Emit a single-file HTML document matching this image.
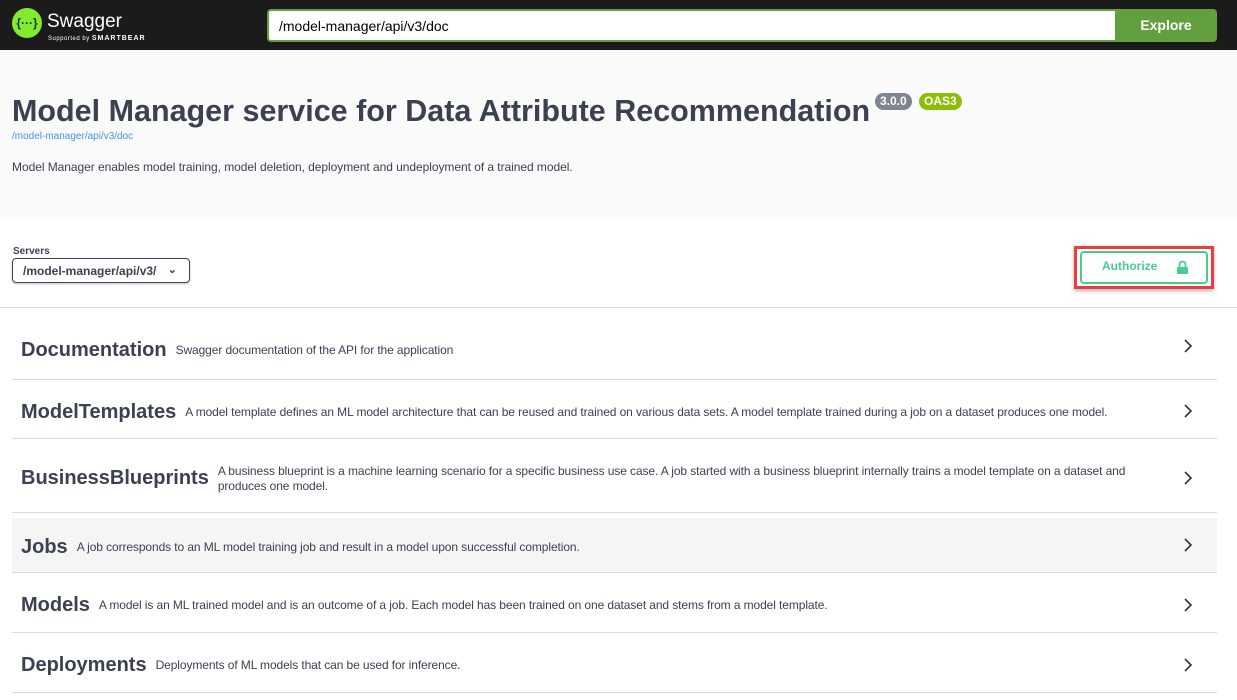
<!DOCTYPE html>
<html><head><meta charset="utf-8"><style>
*{margin:0;padding:0;box-sizing:border-box}
body{width:1237px;height:700px;overflow:hidden;background:#fff;font-family:"Liberation Sans",Arial,sans-serif;color:#3b4151}
.top{height:50px;background:#1b1b1b;position:relative}
.logo{position:absolute;left:12px;top:8px;width:30px;height:30px;border-radius:50%;background:#85ea2d;color:#173647;font-size:12px;font-weight:bold;text-align:center;line-height:30px}
.sw{position:absolute;left:47px;top:11px;color:#fff;font-size:19px}
.sb{position:absolute;left:48px;top:35px;color:#fff;font-size:6px;letter-spacing:.5px}
.sb b{font-size:7px;letter-spacing:1px}
.inp{position:absolute;left:267px;top:9px;width:850px;height:33px;border:2px solid #62a03f;border-radius:4px 0 0 4px;background:#fff;font-size:14px;padding:7px 10px;color:#000}
.exp{position:absolute;left:1115px;top:9px;width:102px;height:33px;background:#62a03f;color:#fff;font-weight:bold;font-size:14px;text-align:center;line-height:33px;border-radius:0 4px 4px 0}
.info{background:#fafafa;height:167px;position:relative}
h1{position:absolute;left:12px;top:44px;font-size:30.5px;font-weight:bold;color:#3b4151}
.bd{position:absolute;top:43px;height:17px;border-radius:9px;color:#fff;font-size:12px;font-weight:bold;line-height:17px;padding:0 5px}
.url{position:absolute;left:12px;top:81px;font-size:10px;color:#4990e2}
.desc{position:absolute;left:12px;top:110px;font-size:12px;letter-spacing:-.05px}
.srv{height:91px;position:relative;border-bottom:1px solid #ddd}
.lbl{position:absolute;left:13px;top:29px;font-size:10px;font-weight:bold}
.sel{position:absolute;left:12px;top:41px;width:178px;height:25px;border:1px solid #41444e;border-radius:4px;font-size:12px;font-weight:bold;padding:5px 10px;box-shadow:0 1px 2px rgba(0,0,0,.25)}
.sel span{position:absolute;right:12px;top:4px;font-size:11px}
.red{position:absolute;left:1074px;top:29px;width:140px;height:43px;border:3px solid #ee3b3b;box-shadow:0 2px 4px rgba(0,0,0,.3)}
.auth{position:absolute;left:3px;top:2px;width:128px;height:33px;border:2px solid #49cc90;border-radius:4px;color:#49cc90;font-weight:bold;font-size:12px;padding:6px 0 0 20px}
.lock{position:absolute;left:95px;top:7px;width:11px;height:14px}
.tags{padding:0 20px 0 12px}
.tag{border-bottom:1px solid #d8dade;position:relative;display:flex;align-items:center;padding:6px 60px 0 9px}
.tag h3{font-size:20px;font-weight:bold;margin-right:9px;white-space:nowrap}
.tag p{font-size:12px;line-height:15px;letter-spacing:-.1px}
.ch{position:absolute;right:24px;top:50%;margin-top:-6px}
</style></head><body>
<div class="top">
<div class="logo">{···}</div><div class="sw">Swagger</div><div class="sb">Supported by <b>SMARTBEAR</b></div>
<div class="inp">/model-manager/api/v3/doc</div><div class="exp">Explore</div>
</div>
<div class="info">
<h1>Model Manager service for Data Attribute Recommendation</h1>
<div class="bd" style="left:875px;background:#7d8492">3.0.0</div>
<div class="bd" style="left:919px;background:#89bf04">OAS3</div>
<div class="url">/model-manager/api/v3/doc</div>
<div class="desc">Model Manager enables model training, model deletion, deployment and undeployment of a trained model.</div>
</div>
<div class="srv">
<div class="lbl">Servers</div>
<div class="sel">/model-manager/api/v3/<span>⌄</span></div>
<div class="red"><div class="auth">Authorize<svg class="lock" viewBox="0 0 11 14"><path d="M2.5 7V4.5a3 3 0 0 1 6 0V7" stroke="#49cc90" stroke-width="1.8" fill="none"/><rect x="0" y="7" width="11" height="7" rx="1" fill="#49cc90"/></svg></div></div>
</div>
<div class="tags">
<div class="tag" style="height:72px;padding-top:14px"><h3>Documentation</h3><p>Swagger documentation of the API for the application</p><svg class="ch" width="10" height="16" viewBox="0 0 10 16"><path d="M2 2l6 6-6 6" stroke="#333" stroke-width="1.6" fill="none"/></svg></div>
<div class="tag" style="height:59px"><h3>ModelTemplates</h3><p>A model template defines an ML model architecture that can be reused and trained on various data sets. A model template trained during a job on a dataset produces one model.</p><svg class="ch" width="10" height="16" viewBox="0 0 10 16"><path d="M2 2l6 6-6 6" stroke="#333" stroke-width="1.6" fill="none"/></svg></div>
<div class="tag" style="height:74px"><h3>BusinessBlueprints</h3><p>A business blueprint is a machine learning scenario for a specific business use case. A job started with a business blueprint internally trains a model template on a dataset and produces one model.</p><svg class="ch" width="10" height="16" viewBox="0 0 10 16"><path d="M2 2l6 6-6 6" stroke="#333" stroke-width="1.6" fill="none"/></svg></div>
<div class="tag" style="height:60px;padding-top:10px;background:linear-gradient(#fff 5px,#f5f5f5 5px)"><h3>Jobs</h3><p>A job corresponds to an ML model training job and result in a model upon successful completion.</p><svg class="ch" width="10" height="16" viewBox="0 0 10 16"><path d="M2 2l6 6-6 6" stroke="#333" stroke-width="1.6" fill="none"/></svg></div>
<div class="tag" style="height:60px"><h3>Models</h3><p>A model is an ML trained model and is an outcome of a job. Each model has been trained on one dataset and stems from a model template.</p><svg class="ch" width="10" height="16" viewBox="0 0 10 16"><path d="M2 2l6 6-6 6" stroke="#333" stroke-width="1.6" fill="none"/></svg></div>
<div class="tag" style="height:60px"><h3>Deployments</h3><p>Deployments of ML models that can be used for inference.</p><svg class="ch" width="10" height="16" viewBox="0 0 10 16"><path d="M2 2l6 6-6 6" stroke="#333" stroke-width="1.6" fill="none"/></svg></div>
</div>
</body></html>
